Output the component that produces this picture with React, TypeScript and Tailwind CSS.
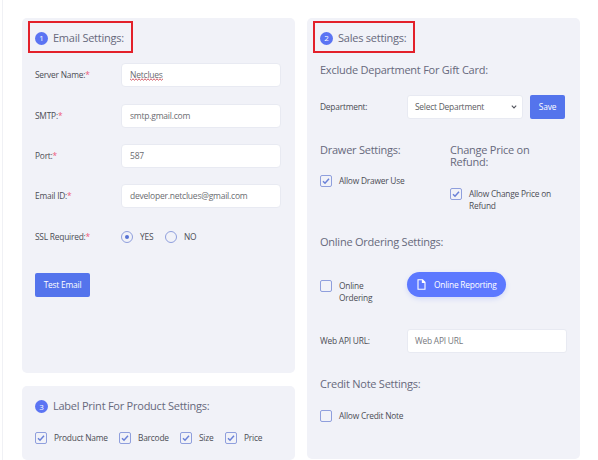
import React from "react";

const FONT = "font-['Open_Sans','Noto_Sans',sans-serif]";

function Badge({ n }: { n: number }) {
  return (
    <span className="flex h-[13px] w-[13px] shrink-0 items-center justify-center rounded-full bg-[#5b74f3] text-[8px] leading-none tracking-normal text-white">
      {n}
    </span>
  );
}

function Title({ children }: { children: React.ReactNode }) {
  return <h2 className="text-[11px] leading-[12.5px] tracking-[-0.24px] whitespace-nowrap text-[#67697c]">{children}</h2>;
}

function MarkedHeader({ n, title, width }: { n: number; title: string; width: string }) {
  return (
    <div className={`mt-[3px] ml-[6px] flex h-[32px] shrink-0 items-center gap-[5px] border-2 border-[#e3202a] pt-[2px] pl-[5px] ${width}`}>
      <Badge n={n} />
      <Title>{title}</Title>
    </div>
  );
}

function Field({ label, children }: { label: string; children: React.ReactNode }) {
  return (
    <div className="flex h-[40.4px] items-center">
      <div className="w-[86px] shrink-0">
        {label}
        <span className="text-[#ee5b7b]">*</span>
      </div>
      {children}
    </div>
  );
}

function TextBox({ children }: { children: React.ReactNode }) {
  return (
    <div className="flex h-6 w-40 items-center rounded-[4px] border border-[#e8eaf2] bg-white pl-2 text-[8.5px] text-[#6b6c71]">
      {children}
    </div>
  );
}

function Check({ on = false }: { on?: boolean }) {
  return (
    <span className="flex h-[12px] w-[12px] shrink-0 items-center justify-center rounded-[2px] border border-[#8f9fdd]">
      {on && (
        <svg viewBox="0 0 8 8" className="h-[8px] w-[8px]" fill="none" stroke="#6a81d8" strokeWidth="1.5">
          <path d="M1 4.3 3 6.2 7 1.8" />
        </svg>
      )}
    </span>
  );
}

function Radio({ on = false }: { on?: boolean }) {
  return (
    <span className="flex h-[12px] w-[12px] shrink-0 items-center justify-center rounded-full border border-[#8f9fdd]">
      {on && <span className="h-1 w-1 rounded-full bg-[#5672d4]" />}
    </span>
  );
}

export default function App() {
  return (
    <div className={`flex h-[460px] w-[598px] overflow-hidden bg-white text-[8.4px] leading-[12px] tracking-[-0.22px] whitespace-nowrap text-[#4c4d55] ${FONT}`}>
      <div className="mr-[19px] ml-[2px] w-px shrink-0 bg-[#f0f1f5]" />
      <div className="mr-3 flex w-[273px] shrink-0 flex-col pt-[18px]">
        <section className="flex h-[355px] shrink-0 flex-col rounded-[5px] bg-[#f1f2f8]">
          <MarkedHeader n={1} title="Email Settings:" width="w-[105px]" />
          <div className="mt-[2px] pl-[13px]">
            <Field label="Server Name:">
              <TextBox>
                <span className="relative">
                  Netclues
                  <svg viewBox="0 0 33 3" className="absolute bottom-0 left-0 h-[3px] w-[33px]" fill="none" stroke="#cf5560" strokeWidth="1">
                    <path d="M0 .8 1.5 2.2 3 .8 4.5 2.2 6 .8 7.5 2.2 9 .8 10.5 2.2 12 .8 13.5 2.2 15 .8 16.5 2.2 18 .8 19.5 2.2 21 .8 22.5 2.2 24 .8 25.5 2.2 27 .8 28.5 2.2 30 .8 31.5 2.2 33 .8" />
                  </svg>
                </span>
              </TextBox>
            </Field>
            <Field label="SMTP:">
              <TextBox>smtp.gmail.com</TextBox>
            </Field>
            <Field label="Port:">
              <TextBox>587</TextBox>
            </Field>
            <Field label="Email ID:">
              <TextBox>developer.netclues@gmail.com</TextBox>
            </Field>
            <Field label="SSL Required:">
              <Radio on />
              <span className="ml-[7px] w-[25px]">YES</span>
              <Radio />
              <span className="ml-[7px]">NO</span>
            </Field>
            <button className="mt-[16px] flex h-6 w-[55px] items-center justify-center rounded-[2px] bg-[#5474ec] text-white">
              Test Email
            </button>
          </div>
        </section>
        <section className="mt-[13px] h-[74px] shrink-0 rounded-[5px] bg-[#f1f2f8] pt-[14px] pl-[13px]">
          <div className="flex items-center gap-[5px]">
            <Badge n={3} />
            <Title>Label Print For Product Settings:</Title>
          </div>
          <div className="mt-[19px] flex items-center gap-[7px]">
            <Check on />
            <span className="w-[58px]">Product Name</span>
            <Check on />
            <span className="w-[35px]">Barcode</span>
            <Check on />
            <span className="w-[19px]">Size</span>
            <Check on />
            <span>Price</span>
          </div>
        </section>
      </div>

      <section className="mt-[18px] flex h-[441px] w-[273px] shrink-0 flex-col rounded-[5px] bg-[#f1f2f8]">
        <MarkedHeader n={2} title="Sales settings:" width="w-[102px]" />
        <div className="flex flex-col pl-[13px]">
          <div className="mt-[11px]">
            <Title>Exclude Department For Gift Card:</Title>
          </div>
          <div className="mt-[18px] flex h-6 items-center">
            <span className="w-[87px]">Department:</span>
            <div className="flex h-6 w-[116px] items-center justify-between rounded-[3px] border border-[#e8eaf2] bg-white pr-[5px] pl-[7px] text-[#5c5d63]">
              Select Department
              <svg viewBox="0 0 6 4" className="h-1 w-1.5" fill="none" stroke="#55565f" strokeWidth="1.1">
                <path d="M.8.6 3 2.9 5.2.6" />
              </svg>
            </div>
            <button className="ml-[7px] flex h-6 w-[35px] items-center justify-center rounded-[2px] bg-[#5474ec] text-white">Save</button>
          </div>
          <div className="mt-[25px] flex h-[92px]">
            <div className="w-[130px]">
              <Title>Drawer Settings:</Title>
              <div className="mt-[19px] flex items-center gap-[7px]">
                <Check on />
                Allow Drawer Use
              </div>
            </div>
            <div>
              <Title>Change Price on</Title>
              <Title>Refund:</Title>
              <div className="mt-[19px] flex gap-[7px]">
                <Check on />
                <span className="leading-[12.4px]">
                  Allow Change Price on
                  <br />
                  Refund
                </span>
              </div>
            </div>
          </div>
          <Title>Online Ordering Settings:</Title>
          <div className="mt-[24px] flex h-[32px]">
            <div className="mt-[8px] flex w-[87px] gap-[7px]">
              <Check />
              <span>
                Online
                <br />
                Ordering
              </span>
            </div>
            <div className="flex h-[25px] w-[99px] items-center rounded-full bg-[#5c78ff] pl-[10px] text-white shadow-[0_2px_5px_rgba(92,120,255,0.2)]">
              <svg viewBox="0 0 9 11" className="mr-[8px] h-[11px] w-[9px]" fill="none" stroke="white" strokeWidth="1.1">
                <path d="M1 .8H5.6L8 3.3V10.2H1ZM5.4 1V3.5H8" />
              </svg>
              <span className="font-medium">Online Reporting</span>
            </div>
          </div>
          <div className="mt-[25px] flex h-6 items-center">
            <span className="w-[87px]">Web API URL:</span>
            <div className="flex h-6 w-40 items-center rounded-[3px] border border-[#e8eaf2] bg-white pl-[7px] text-[#77787e]">Web API URL</div>
          </div>
          <div className="mt-[25px]">
            <Title>Credit Note Settings:</Title>
          </div>
          <div className="mt-[19px] flex items-center gap-[7px]">
            <Check />
            Allow Credit Note
          </div>
        </div>
      </section>
    </div>
  );
}
